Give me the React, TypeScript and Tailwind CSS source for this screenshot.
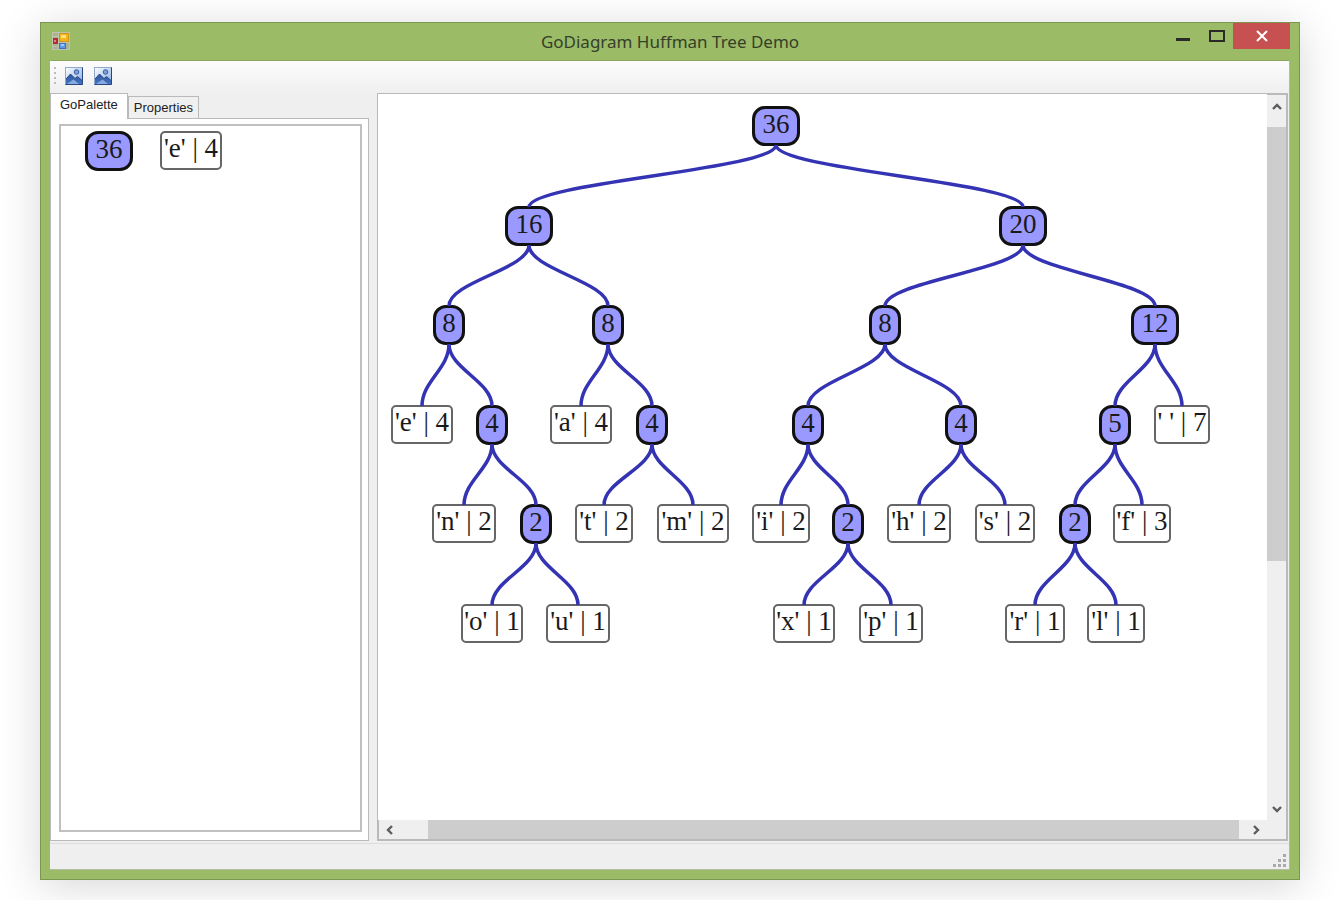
import { useState } from 'react';
import clsx from 'clsx';

interface TreeNode {
    id: string;
    label: string;
    x: number;
    y: number;
    w: number;
    parent?: string;
    leaf?: boolean;
}

// x is the horizontal centre of a node, y its top edge
const nodes: TreeNode[] = [
    { id: 'root', label: '36', x: 398, y: 12, w: 48 },
    { id: 'n16', label: '16', x: 151, y: 112, w: 48, parent: 'root' },
    { id: 'n20', label: '20', x: 645, y: 112, w: 48, parent: 'root' },
    { id: 'n8a', label: '8', x: 71, y: 211, w: 32, parent: 'n16' },
    { id: 'n8b', label: '8', x: 230, y: 211, w: 32, parent: 'n16' },
    { id: 'n8c', label: '8', x: 507, y: 211, w: 32, parent: 'n20' },
    { id: 'n12', label: '12', x: 777, y: 211, w: 48, parent: 'n20' },
    { id: 'e', label: "'e' | 4", x: 44, y: 311, w: 62, parent: 'n8a', leaf: true },
    { id: 'n4a', label: '4', x: 114, y: 311, w: 32, parent: 'n8a' },
    { id: 'a', label: "'a' | 4", x: 203, y: 311, w: 62, parent: 'n8b', leaf: true },
    { id: 'n4b', label: '4', x: 274, y: 311, w: 32, parent: 'n8b' },
    { id: 'n4c', label: '4', x: 430, y: 311, w: 32, parent: 'n8c' },
    { id: 'n4d', label: '4', x: 583, y: 311, w: 32, parent: 'n8c' },
    { id: 'n5', label: '5', x: 737, y: 311, w: 32, parent: 'n12' },
    { id: 'space', label: "' ' | 7", x: 804, y: 311, w: 56, parent: 'n12', leaf: true },
    { id: 'n', label: "'n' | 2", x: 86, y: 410, w: 64, parent: 'n4a', leaf: true },
    { id: 'n2a', label: '2', x: 158, y: 410, w: 32, parent: 'n4a' },
    { id: 't', label: "'t' | 2", x: 226, y: 410, w: 58, parent: 'n4b', leaf: true },
    { id: 'm', label: "'m' | 2", x: 315, y: 410, w: 72, parent: 'n4b', leaf: true },
    { id: 'i', label: "'i' | 2", x: 403, y: 410, w: 58, parent: 'n4c', leaf: true },
    { id: 'n2b', label: '2', x: 470, y: 410, w: 32, parent: 'n4c' },
    { id: 'h', label: "'h' | 2", x: 541, y: 410, w: 64, parent: 'n4d', leaf: true },
    { id: 's', label: "'s' | 2", x: 627, y: 410, w: 60, parent: 'n4d', leaf: true },
    { id: 'n2c', label: '2', x: 697, y: 410, w: 32, parent: 'n5' },
    { id: 'f', label: "'f' | 3", x: 764, y: 410, w: 58, parent: 'n5', leaf: true },
    { id: 'o', label: "'o' | 1", x: 114, y: 510, w: 62, parent: 'n2a', leaf: true },
    { id: 'u', label: "'u' | 1", x: 200, y: 510, w: 64, parent: 'n2a', leaf: true },
    { id: 'x', label: "'x' | 1", x: 426, y: 510, w: 62, parent: 'n2b', leaf: true },
    { id: 'p', label: "'p' | 1", x: 513, y: 510, w: 64, parent: 'n2b', leaf: true },
    { id: 'r', label: "'r' | 1", x: 657, y: 510, w: 60, parent: 'n2c', leaf: true },
    { id: 'l', label: "'l' | 1", x: 738, y: 510, w: 58, parent: 'n2c', leaf: true },
];

const linkPath = (node: TreeNode) => {
    const from = nodes.find((n) => n.id === node.parent)!;
    const y1 = from.y + 39;
    const y2 = node.y + 1;
    const bend = (y2 - y1) * 0.4;
    return `M${from.x} ${y1}C${from.x} ${y1 + bend} ${node.x} ${y2 - bend} ${node.x} ${y2}`;
};

const NodeBox = ({ label, leaf, w }: { label: string; leaf?: boolean; w: number }) => (
    <div
        className={clsx(
            "flex justify-center whitespace-nowrap font-['Liberation_Serif',serif] text-[27px] leading-[30px] text-[#1a1a1a]",
            leaf ? 'h-[39px] rounded-[5px] border-2 border-[#666] bg-white' : 'h-10 rounded-[13px] border-[3px] border-[#111] bg-[#9999ff]',
        )}
        style={{ width: w }}
    >
        {label}
    </div>
);

const PictureIcon = ({ id }: { id: string }) => (
    <svg width="18" height="18" viewBox="0 0 18 18">
        <defs>
            <linearGradient id={id} x1="0" y1="0" x2="1" y2="1">
                <stop offset="0" stopColor="#ffffff" />
                <stop offset="1" stopColor="#86abe2" />
            </linearGradient>
            <linearGradient id={`${id}-hill`} x1="0" y1="0" x2="0" y2="1">
                <stop offset="0" stopColor="#2f5596" />
                <stop offset="1" stopColor="#4474c4" />
            </linearGradient>
        </defs>
        <rect x="0.5" y="0.5" width="17" height="17" fill={`url(#${id})`} stroke="#93a9cc" />
        <path d="M1 12L5.5 7L10 11.5L12.5 9.5L17 13.5V17H1Z" fill={`url(#${id}-hill)`} />
        <path d="M1 12L5.5 7L10 11.5L12.5 9.5L17 13.5" fill="none" stroke="#28498a" />
        <path d="M2 17L8.5 12.5L14 17Z" fill="#87aae0" />
        <circle cx="11.5" cy="5" r="2.3" fill="#7b9fd8" stroke="#3a5ea3" />
        <path d="M17.5 0.5V17.5H0.5" fill="none" stroke="#27477f" />
    </svg>
);

const AppIcon = () => (
    <svg width="18" height="18" viewBox="0 0 18 18">
        <rect x="0.5" y="0.5" width="17" height="17" fill="#a9b58f" stroke="#bcc4ae" />
        <path d="M1 4.5H7M1 14.5H6M6.5 1V17M1 10.5H17" stroke="#bcc4ae" />
        <rect x="1" y="6" width="5" height="6" fill="#b52c34" />
        <rect x="2" y="8" width="2" height="2" fill="#e0857f" />
        <rect x="7.5" y="1.5" width="9" height="8" fill="#f3b51f" stroke="#cf9418" />
        <rect x="9" y="3" width="5" height="3" fill="#ffe27a" />
        <rect x="7.5" y="11.5" width="6" height="5" fill="#5f97ec" stroke="#3d72cb" />
        <rect x="9" y="12" width="3" height="2" fill="#a4c8ff" />
    </svg>
);

const Chevron = ({ className }: { className?: string }) => (
    <svg width="10" height="10" viewBox="0 0 10 10" className={className}>
        <path d="M1 7L5 3L9 7" fill="none" stroke="#5c5c5c" strokeWidth="2.4" />
    </svg>
);

const tabs = ['GoPalette', 'Properties'];

export default function App() {
    const [activeTab, setActiveTab] = useState('GoPalette');

    return (
        <div className="flex min-h-screen overflow-hidden bg-white px-10 pt-[22px] pb-5 font-['Liberation_Sans',sans-serif]">
            <div className="flex min-w-0 flex-1 flex-col border border-[#7c964f] bg-[#9bbb67] px-[9px] pb-[9px] shadow-[0_6px_40px_rgba(0,0,0,0.16)]">
                <header className="grid h-[37px] shrink-0 grid-cols-[1fr_auto_1fr] items-start">
                    <div className="pt-[9px] pl-0.5">
                        <AppIcon />
                    </div>
                    <h1 className="pt-[7px] font-['Noto_Sans',sans-serif] text-[17px] leading-6 text-[#35402a]">
                        GoDiagram Huffman Tree Demo
                    </h1>
                    <div className="flex justify-end">
                        <button aria-label="Minimize" className="flex h-[26px] w-[34px] items-center justify-center">
                            <svg width="14" height="12" viewBox="0 0 14 12">
                                <rect y="8" width="14" height="3" fill="#2a2a2a" />
                            </svg>
                        </button>
                        <button aria-label="Maximize" className="flex h-[26px] w-[33px] items-center justify-center">
                            <svg width="16" height="12" viewBox="0 0 16 12">
                                <path d="M0 0H16V12H0ZM2 2V10H14V2Z" fill="#2a2a2a" fillRule="evenodd" />
                            </svg>
                        </button>
                        <button aria-label="Close" className="flex h-[26px] w-[57px] items-center justify-center bg-[#c75050]">
                            <svg width="12" height="12" viewBox="0 0 12 12">
                                <path d="M1 1L11 11M11 1L1 11" stroke="#fff" strokeWidth="2" />
                            </svg>
                        </button>
                    </div>
                </header>

                <div className="flex min-h-0 flex-1 flex-col border border-l-0 border-[#b4bca4] border-t-[#8da75c] bg-[#efefef]">
                    <div className="flex h-8 shrink-0 items-center gap-[11px] bg-linear-to-b from-[#fdfdfd] to-[#efefef] pb-[3px] pl-1">
                        <div className="flex flex-col gap-[3px]">
                            <span className="size-0.5 bg-[#bdbdbd]" />
                            <span className="size-0.5 bg-[#bdbdbd]" />
                            <span className="size-0.5 bg-[#bdbdbd]" />
                            <span className="size-0.5 bg-[#bdbdbd]" />
                        </div>
                        <button aria-label="Open picture" className="-ml-0.5">
                            <PictureIcon id="pic-a" />
                        </button>
                        <button aria-label="Save picture">
                            <PictureIcon id="pic-b" />
                        </button>
                    </div>

                    <div className="flex min-h-0 flex-1 gap-2 pr-px">
                        <aside className="flex w-[319px] shrink-0 flex-col">
                            <div role="tablist" className="flex h-[25px] items-end">
                                {tabs.map((tab) => (
                                    <button
                                        key={tab}
                                        role="tab"
                                        aria-selected={activeTab === tab}
                                        onClick={() => setActiveTab(tab)}
                                        className={clsx(
                                            'border border-b-0 border-[#bababa] text-[13px] leading-5 text-[#222]',
                                            activeTab === tab ? 'z-10 -mb-px h-[26px] bg-white px-[9px] pb-1' : 'h-[22px] bg-[#f0f0f0] px-[5px]',
                                        )}
                                    >
                                        {tab}
                                    </button>
                                ))}
                            </div>
                            <div className="flex flex-1 border border-[#bababa] bg-white pt-[5px] pr-1.5 pb-2 pl-2">
                                <div className="flex flex-1 items-start gap-[27px] border-2 border-[#c0c0c0] pt-[5px] pl-6">
                                    {activeTab === 'GoPalette' && (
                                        <>
                                            <NodeBox label="36" w={48} />
                                            <NodeBox label="'e' | 4" w={62} leaf />
                                        </>
                                    )}
                                </div>
                            </div>
                        </aside>

                        <main className="flex min-w-0 flex-1 flex-col border-2 border-[#bababa] bg-[#efefef]">
                            <div className="flex min-h-0 flex-1">
                                <div className="relative -mt-px -ml-px min-h-[560px] min-w-0 flex-1 overflow-hidden bg-white">
                                    {nodes.map((node) => (
                                        <div key={node.id} className="absolute -translate-x-1/2" style={{ left: node.x, top: node.y }}>
                                            <NodeBox label={node.label} w={node.w} leaf={node.leaf} />
                                        </div>
                                    ))}
                                    <svg className="pointer-events-none absolute inset-0 size-full">
                                        {nodes.filter((n) => n.parent).map((node) => (
                                            <path key={node.id} d={linkPath(node)} fill="none" stroke="#3333b3" strokeWidth="3.5" />
                                        ))}
                                    </svg>
                                </div>
                                <div className="flex w-[19px] flex-col">
                                    <button aria-label="Scroll up" className="flex h-8 items-center justify-center pb-2">
                                        <Chevron />
                                    </button>
                                    <div className="flex-[434] bg-[#cdcdcd]" />
                                    <div className="flex-[236]" />
                                    <button aria-label="Scroll down" className="flex h-[23px] items-center justify-center">
                                        <Chevron className="rotate-180" />
                                    </button>
                                </div>
                            </div>
                            <div className="flex h-[19px] shrink-0">
                                <button aria-label="Scroll left" className="flex w-[22px] items-center justify-center">
                                    <Chevron className="-rotate-90" />
                                </button>
                                <div className="flex-[27]" />
                                <div className="flex-[811] bg-[#cdcdcd]" />
                                <div className="flex-[6]" />
                                <button aria-label="Scroll right" className="mr-[19px] flex w-[22px] items-center justify-center">
                                    <Chevron className="rotate-90" />
                                </button>
                            </div>
                        </main>
                    </div>

                    <footer className="mt-0.5 flex h-[26px] shrink-0 items-end justify-end border-t border-[#dcdcdc] pr-[3px] pb-0.5">
                        <svg width="14" height="14" viewBox="0 0 14 14" fill="#a9a9a9">
                            <path d="M11 1h3v3h-3zM6 6h3v3h-3zM11 6h3v3h-3zM1 11h3v3h-3zM6 11h3v3h-3zM11 11h3v3h-3z" />
                        </svg>
                    </footer>
                </div>
            </div>
        </div>
    );
}
